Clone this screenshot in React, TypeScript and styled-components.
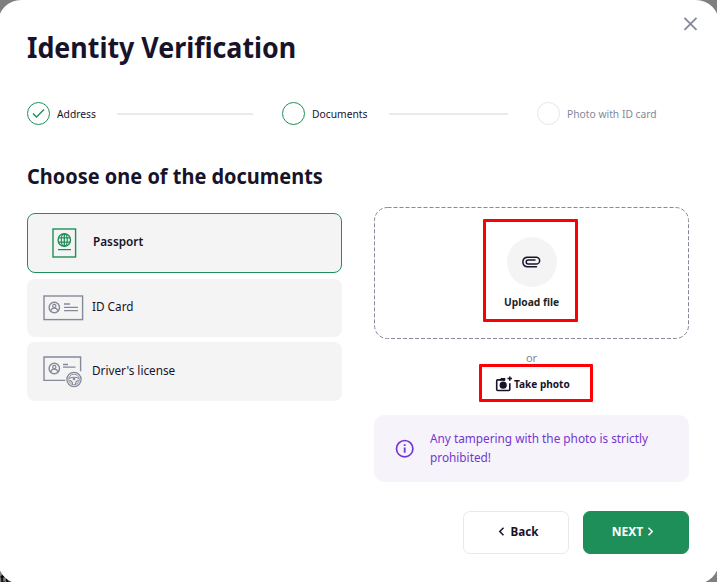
import React from "react";
import styled, { createGlobalStyle, css } from "styled-components";

const ink = "#17132b";
const green = "#1f8f59";
const grey = "#858999";

const GlobalStyle = createGlobalStyle`
  * { box-sizing: border-box; }
  html, body, #root { height: 100%; }
  body { margin: 0; overflow: hidden; background: #7f7f7f; font-family: "Noto Sans", sans-serif; color: ${ink}; }
  button { font-family: inherit; color: inherit; cursor: pointer; }
  svg { display: block; flex: none; }
`;

const Backdrop = styled.div`
  position: relative;
  height: 582px;
  width: 717px;
  overflow: hidden;
`;

const PageText = styled.span`
  position: absolute;
  left: 0;
  bottom: -5px;
  font-size: 12px;
  line-height: 16px;
  font-weight: 700;
  color: #050510;
`;

const Modal = styled.main`
  position: relative;
  width: 721px;
  height: 584px;
  margin-left: -2px;
  padding: 27px 30px 0 29px;
  border-radius: 23px;
  background: #fff;
`;

const CloseButton = styled.button`
  position: absolute;
  top: 16px;
  right: 21px;
  padding: 0;
  border: 0;
  background: none;
`;

/* Slightly condensed lettering. */
const Narrow = styled.span<{ $x: number; $center?: boolean }>`
  display: block;
  white-space: nowrap;
  transform: scaleX(${(p) => p.$x});
  transform-origin: ${(p) => (p.$center ? "center" : "left")};
`;

const Title = styled.h1`
  margin: 0;
  height: 40px;
  font-size: 29px;
  line-height: 40px;
  font-weight: 700;
`;

const Steps = styled.ol`
  display: flex;
  align-items: center;
  height: 24px;
  margin: 35px 0 0;
  padding: 0;
  list-style: none;
`;

const Step = styled.li<{ $muted?: boolean }>`
  display: flex;
  align-items: center;
  gap: 7px;
  font-size: 11px;
  line-height: 16px;
  white-space: nowrap;
  color: ${(p) => (p.$muted ? grey : ink)};
`;

const StepMark = styled.span<{ $muted?: boolean }>`
  display: grid;
  place-items: center;
  width: 23px;
  height: 23px;
  margin-bottom: 1px;
  border: 1px solid ${(p) => (p.$muted ? "#e6e6e8" : green)};
  border-radius: 50%;
`;

const StepLabel = styled.span<{ $w: number }>`
  width: ${(p) => p.$w}px;
  padding-left: 0.4px;
`;

const StepLine = styled.li<{ $w: number; $before: number }>`
  width: ${(p) => p.$w}px;
  height: 2px;
  margin: 0 29px 0 ${(p) => p.$before}px;
  background: #e9eaea;
`;

const Subtitle = styled.h2`
  margin: 33px 0 0;
  height: 33px;
  font-size: 22px;
  line-height: 32px;
  font-weight: 700;
`;

const Columns = styled.div`
  display: grid;
  grid-template-columns: 315px 315px;
  column-gap: 32px;
  margin-top: 15px;
`;

const Options = styled.div`
  display: flex;
  flex-direction: column;
  padding-top: 6px;
`;

const Option = styled.button<{ $selected?: boolean; $h: number; $gap: number; $pad: number }>`
  display: flex;
  align-items: center;
  height: ${(p) => p.$h}px;
  margin-bottom: ${(p) => p.$gap}px;
  padding: 0 0 0 ${(p) => p.$pad}px;
  border: 0;
  border-radius: 8px;
  background: #f4f4f4;
  font-size: 12.5px;
  text-align: left;
  ${(p) =>
    p.$selected &&
    css`
      border: 1px solid ${green};
      font-weight: 600;
    `}
`;

const OptionLabel = styled.span<{ $gap: number }>`
  margin: -2px 0 0 ${(p) => p.$gap}px;
  line-height: 18px;
`;

const UploadColumn = styled.div`
  display: flex;
  flex-direction: column;
`;

const DropZone = styled.div`
  display: flex;
  height: 132px;
  padding: 12px 0 0 109px;
`;

const DropOutline = styled.svg`
  position: absolute;
  margin: -12px 0 0 -109px;
`;

const RedFrame = styled.div<{ $w: number; $h: number }>`
  width: ${(p) => p.$w}px;
  height: ${(p) => p.$h}px;
  border: 3px solid #fb0007;
  border-radius: 1px;
`;

const UploadButton = styled.button`
  display: flex;
  flex-direction: column;
  align-items: center;
  width: 100%;
  padding: 15px 0 0 3px;
  border: 0;
  background: none;
  color: #242424;
  font-size: 11px;
  line-height: 16px;
  font-weight: 700;
`;

const ClipCircle = styled.span`
  display: grid;
  place-items: center;
  width: 50px;
  height: 50px;
  margin-bottom: 7px;
  padding-right: 2px;
  border-radius: 50%;
  background: #f4f4f4;
`;

const Or = styled.p`
  height: 25px;
  margin: 0;
  padding-top: 11px;
  color: ${grey};
  font-size: 11px;
  line-height: 16px;
  text-align: center;
`;

const PhotoRow = styled.div`
  padding-left: 105px;
`;

const PhotoButton = styled.button`
  display: flex;
  align-items: center;
  gap: 2px;
  height: 34px;
  padding: 0 0 0 13px;
  border: 0;
  background: none;
  font-size: 11px;
  line-height: 16px;
  font-weight: 700;
`;

const Notice = styled.div`
  display: flex;
  align-items: center;
  gap: 16px;
  height: 67px;
  margin-top: 13px;
  padding-left: 21px;
  border-radius: 10px;
  background: #f6f3fb;
  color: #7137d0;
  font-size: 12.5px;
  line-height: 19px;
`;

const NoticeText = styled.p`
  margin: -2px 0 0;
`;

const Actions = styled.footer`
  display: flex;
  justify-content: flex-end;
  gap: 14px;
  margin-top: 29px;
`;

const ActionButton = styled.button<{ $primary?: boolean }>`
  display: flex;
  align-items: center;
  justify-content: center;
  gap: ${(p) => (p.$primary ? 4 : 5)}px;
  width: 106px;
  height: 43px;
  padding: 0 ${(p) => (p.$primary ? 6 : 0)}px 2px ${(p) => (p.$primary ? 0 : 5)}px;
  border: 1px solid ${(p) => (p.$primary ? green : "#e9e9eb")};
  border-radius: 7px;
  background: ${(p) => (p.$primary ? green : "#fff")};
  color: ${(p) => (p.$primary ? "#fff" : ink)};
  font-size: 12px;
  font-weight: 700;
`;

const CheckIcon = () => (
  <svg width="13" height="11" viewBox="0 0 13 11" fill="none" stroke={green} strokeWidth="1.4">
    <path d="M1 5.5 4.5 9 12 1.5" />
  </svg>
);

const PassportIcon = () => (
  <svg width="25" height="30" viewBox="0 0 25 30" fill="none" stroke={green}>
    <rect x="1" y="1" width="22.6" height="28" strokeWidth="1.4" />
    <circle cx="12.3" cy="12" r="6.2" strokeWidth="1.4" />
    <ellipse cx="12.3" cy="12" rx="3" ry="6.2" strokeWidth="1.2" />
    <path d="M12.3 6v12M6.4 9.8H18M6.4 14.2H18M6 21.6h13" strokeWidth="1.3" />
  </svg>
);

const Person = () => (
  <>
    <circle cx="11.3" cy="12.5" r="5.2" strokeWidth="1.4" />
    <circle cx="11.3" cy="10.9" r="1.6" strokeWidth="1.2" />
    <path d="M7.8 16c.4-2 1.6-2.8 3.5-2.8s3.1.8 3.5 2.8" strokeWidth="1.2" />
  </>
);

const IdCardIcon = () => (
  <svg width="41" height="26" viewBox="0 0 41 26" fill="none" stroke={grey}>
    <rect x="1" y="1" width="38.6" height="23.6" strokeWidth="1.4" />
    <Person />
    <path d="M21 9h6M21 12.3h14M21 15.7h14" strokeWidth="1.3" />
  </svg>
);

const LicenseIcon = () => (
  <svg width="41" height="32" viewBox="0 0 41 32" fill="none" stroke={grey}>
    <path d="M22.3 24.4H1V1h36.6v14.2" strokeWidth="1.4" />
    <Person />
    <path d="M20 8.5h5M20 11.2h12.5" strokeWidth="1.3" />
    <circle cx="31" cy="23.5" r="7.1" strokeWidth="1.3" />
    <circle cx="31" cy="23.5" r="5.3" strokeWidth="0.9" />
    <circle cx="31" cy="23" r="1.3" fill={grey} stroke="none" />
    <path d="M26 22.4c3-1.4 7-1.4 10 0M26.4 24.6c2 0 3 1.2 3.2 3.6M35.6 24.6c-2 0-3 1.2-3.2 3.6" strokeWidth="1.1" />
  </svg>
);

const ClipIcon = () => (
  <svg width="20" height="12" viewBox="0 0 20 12" fill="none" stroke={ink} strokeWidth="1.5" strokeLinecap="round">
    <path d="M15.5 10.7H6A4.8 4.8 0 0 1 6 1.2h9.2a3.4 3.4 0 0 1 0 6.9H7.2a2 2 0 0 1 0-4H14" />
  </svg>
);

const CameraIcon = () => (
  <svg width="17" height="16" viewBox="0 0 17 16">
    <path
      d="M10 3.9H2.7a1 1 0 0 0-1 1v8.6a1 1 0 0 0 1 1h11.1a1 1 0 0 0 1-1V7.2"
      fill="none"
      stroke={ink}
      strokeWidth="1.6"
    />
    <path d="M4.7 4 6 2.1h4.3V4.6H4.7zM14 .4h1.6v1.4H17v1.5h-1.4v1.5H14V3.3h-1.5V1.8H14z" fill={ink} />
    <circle cx="8.2" cy="9.2" r="3.6" fill={ink} />
  </svg>
);

const InfoIcon = () => (
  <svg width="19" height="19" viewBox="0 0 19 19" fill="none" stroke="#7137d0">
    <circle cx="9.7" cy="9.7" r="8.2" strokeWidth="1.7" />
    <path d="M9.7 8.5v5.2M9.7 5.2v1.7" strokeWidth="1.8" />
  </svg>
);

const Chevron = ({ right = false }: { right?: boolean }) => (
  <svg width="7" height="9" viewBox="0 0 7 9" fill="none" stroke="currentColor" strokeWidth="1.5">
    <path d={right ? "M1.5 .8 5.2 4.5 1.5 8.2" : "M5.5 .8 1.8 4.5 5.5 8.2"} />
  </svg>
);

export default function App() {
  return (
    <Backdrop>
      <GlobalStyle />
      <PageText>te</PageText>
      <Modal>
        <CloseButton aria-label="Close">
          <svg width="15" height="15" viewBox="0 0 15 15" stroke={grey} strokeWidth="1.9">
            <path d="m1.5 1.8 12 12m0-12-12 12" />
          </svg>
        </CloseButton>
        <Title><Narrow $x={0.924}>Identity Verification</Narrow></Title>
        <Steps>
          <Step>
            <StepMark><CheckIcon /></StepMark>
            <StepLabel $w={40}><Narrow $x={0.935}>Address</Narrow></StepLabel>
          </Step>
          <StepLine $w={136} $before={20} />
          <Step>
            <StepMark />
            <StepLabel $w={56}><Narrow $x={0.935}>Documents</Narrow></StepLabel>
          </Step>
          <StepLine $w={119} $before={21} />
          <Step $muted>
            <StepMark $muted />
            <StepLabel $w={90}><Narrow $x={0.935}>Photo with ID card</Narrow></StepLabel>
          </Step>
        </Steps>
        <Subtitle><Narrow $x={0.907}>Choose one of the documents</Narrow></Subtitle>
        <Columns>
          <Options>
            <Option $selected $h={60} $gap={6} $pad={24}>
              <PassportIcon />
              <OptionLabel $gap={16.3}><Narrow $x={0.94}>Passport</Narrow></OptionLabel>
            </Option>
            <Option $h={58} $gap={5} $pad={16}>
              <IdCardIcon />
              <OptionLabel $gap={8}><Narrow $x={0.94}>ID Card</Narrow></OptionLabel>
            </Option>
            <Option $h={59} $gap={0} $pad={16}>
              <LicenseIcon />
              <OptionLabel $gap={8}><Narrow $x={0.94}>Driver's license</Narrow></OptionLabel>
            </Option>
          </Options>
          <UploadColumn>
            <DropZone>
              <DropOutline width="315" height="132">
                <rect x=".5" y=".5" width="314" height="131" rx="13" fill="none" stroke={grey} strokeDasharray="4 2" />
              </DropOutline>
              <RedFrame $w={95} $h={103}>
                <UploadButton>
                  <ClipCircle><ClipIcon /></ClipCircle>
                  <Narrow $x={0.93} $center>Upload file</Narrow>
                </UploadButton>
              </RedFrame>
            </DropZone>
            <Or>or</Or>
            <PhotoRow>
              <RedFrame $w={114} $h={38}>
                <PhotoButton>
                  <CameraIcon />
                  <Narrow $x={0.915}>Take photo</Narrow>
                </PhotoButton>
              </RedFrame>
            </PhotoRow>
            <Notice>
              <InfoIcon />
              <NoticeText>
                <Narrow $x={0.943}>
                  Any tampering with the photo is strictly
                  <br />
                  prohibited!
                </Narrow>
              </NoticeText>
            </Notice>
          </UploadColumn>
        </Columns>
        <Actions>
          <ActionButton><Chevron /><Narrow $x={0.97} $center>Back</Narrow></ActionButton>
          <ActionButton $primary>NEXT<Chevron right /></ActionButton>
        </Actions>
      </Modal>
    </Backdrop>
  );
}
